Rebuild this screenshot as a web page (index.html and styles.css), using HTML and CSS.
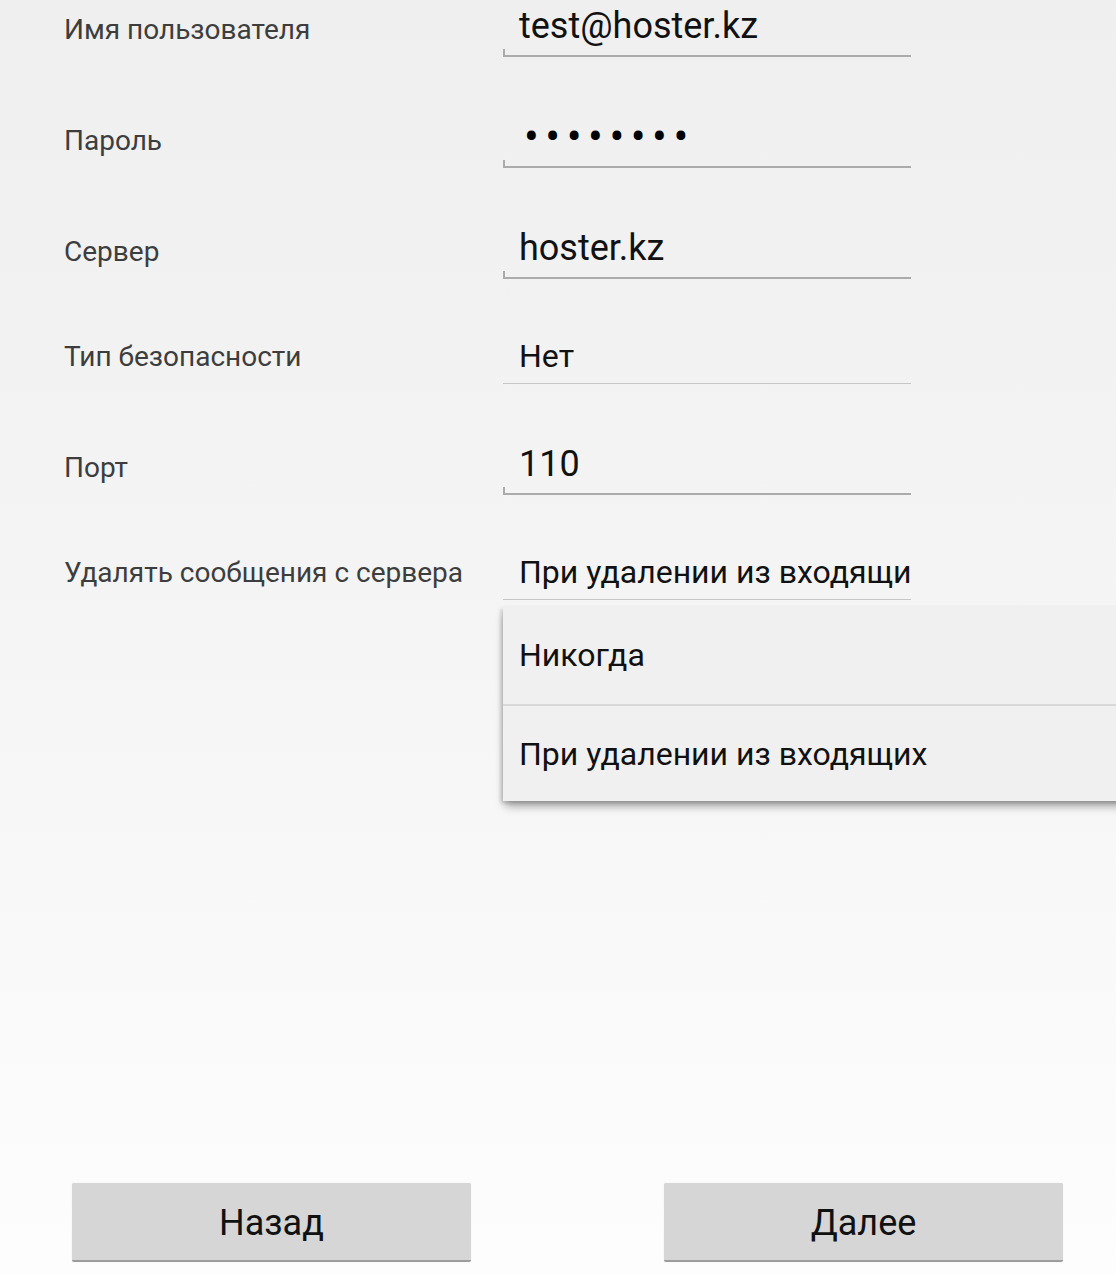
FILE: index.html
```html
<!DOCTYPE html>
<html lang="ru">
<head>
<meta charset="utf-8">
<title>Настройки сервера</title>
<link rel="stylesheet" href="styles.css">
</head>
<body>
<div class="page">
  <div class="form">
    <div class="row row-edit first">
      <div class="label">Имя пользователя</div>
      <div class="field edit"><span class="value">test@hoster.kz</span></div>
    </div>
    <div class="row row-edit">
      <div class="label">Пароль</div>
      <div class="field edit"><span class="value dots">••••••••</span></div>
    </div>
    <div class="row row-edit">
      <div class="label">Сервер</div>
      <div class="field edit"><span class="value">hoster.kz</span></div>
    </div>
    <div class="row row-spin">
      <div class="label">Тип безопасности</div>
      <div class="field spin"><span class="value small">Нет</span></div>
    </div>
    <div class="row row-edit">
      <div class="label">Порт</div>
      <div class="field edit"><span class="value">110</span></div>
    </div>
    <div class="row row-spin">
      <div class="label">Удалять сообщения с сервера</div>
      <div class="field spin"><span class="value small">При удалении из входящих</span></div>
    </div>
    <div class="dropdown">
      <div class="option">Никогда</div>
      <div class="option">При удалении из входящих</div>
    </div>
  </div>
  <div class="buttons">
    <button class="btn">Назад</button>
    <button class="btn">Далее</button>
  </div>
</div>
</body>
</html>
```

FILE: styles.css
```css
* { box-sizing: border-box; }
html, body { margin: 0; padding: 0; }
body {
  font-family: Roboto, "Noto Sans", "Liberation Sans", sans-serif;
  background: linear-gradient(to bottom, #efefef 0%, #f4f4f4 45%, #fdfdfd 100%);
}
.page {
  width: 1116px;
  height: 1274px;
  display: flex;
  flex-direction: column;
  overflow: hidden;
}
.form {
  position: relative;
  margin-top: -54px;
}
.row {
  display: grid;
  grid-template-columns: 439px 408px;
  padding-left: 64px;
  align-items: end;
}
.row-edit { height: 111px; }
.row-spin { height: 105px; }
.label {
  font-size: 28px;
  line-height: 40px;
  color: #3d3d3d;
  padding-bottom: 7px;
  white-space: nowrap;
}
.field {
  position: relative;
  padding-left: 16px;
  overflow: hidden;
  white-space: nowrap;
}
.field.edit {
  border-bottom: 2px solid #ababab;
  height: 56px;
  line-height: 40px;
  padding-top: 5px;
}
.field.edit::before {
  content: "";
  position: absolute;
  left: 0;
  bottom: 0;
  width: 2px;
  height: 6px;
  background: #ababab;
}
.field.spin {
  border-bottom: 1px solid #c6c6c6;
  height: 52px;
  line-height: 40px;
  padding-top: 4px;
}
.value {
  font-size: 36px;
  color: #111;
}
.value.small {
  font-size: 32px;
}
.value.dots {
  display: inline-block;
  font-size: 44px;
  letter-spacing: 6.5px;
  padding-left: 5px;
  color: #000;
}
.dropdown {
  position: absolute;
  left: 503px;
  top: 661px;
  width: 640px;
  background: #f0f0f0;
  box-shadow: 0 7px 9px -2px rgba(0, 0, 0, 0.35), -2px 2px 4px rgba(0, 0, 0, 0.18);
}
.option {
  height: 97px;
  line-height: 97px;
  padding-left: 16px;
  font-size: 32px;
  color: #111;
}
.option + .option {
  border-top: 2px solid #d9d9d9;
}
.buttons {
  margin-top: auto;
  display: flex;
  justify-content: space-between;
  padding: 0 53px 12px 72px;
}
.btn {
  width: 399px;
  height: 79px;
  padding-top: 4px;
  background: #d6d6d6;
  border: none;
  border-bottom: 2px solid #9c9c9c;
  border-radius: 2px;
  font-family: Roboto, "Noto Sans", "Liberation Sans", sans-serif;
  font-size: 36px;
  color: #111;
  box-shadow: 0 0 1px rgba(0,0,0,0.15);
}
```
